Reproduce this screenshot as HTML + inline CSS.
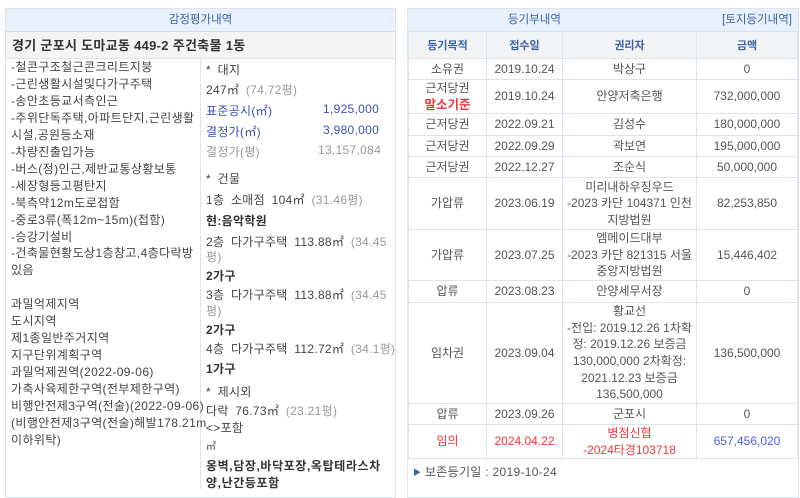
<!DOCTYPE html>
<html><head><meta charset="utf-8"><style>
*{margin:0;padding:0;box-sizing:border-box}
body{width:800px;height:488px;overflow:hidden;background:#fff;font-family:"Liberation Sans","Noto Sans CJK KR",sans-serif;font-size:12px;color:#444;position:relative}
.p{position:absolute;border:1px solid #dde3ea;}
.a{position:absolute;white-space:nowrap;letter-spacing:0.3px;word-spacing:3px}
.hd{position:absolute;background:#e8f1fb;border-bottom:1px solid #d3dde8;color:#3b63a6;text-align:center;font-size:11.5px;line-height:23px}
table{position:absolute;border-collapse:collapse;font-size:12px;color:#555}
td{border:1px solid #dde3ea;text-align:center;line-height:16.5px;padding:0 2px}
th{border:1px solid #dde3ea;background:#f2f3f5;color:#3b63a6;font-weight:bold;font-size:11px;height:27px}
.r{color:#f03838}
.b{font-weight:bold;color:#333}
.g{color:#999}
.bl{color:#3a4fb8}
</style></head><body>
<div class="p" style="left:5px;top:8px;width:391px;height:490px;"></div>
<div class="hd" style="left:6px;top:9px;width:389px;height:23px;">감정평가내역</div>
<div class="a" style="left:6px;top:32px;width:389px;height:27px;background:#f4f4f4;border-bottom:1px solid #dde3ea;font-size:13px;font-weight:bold;color:#333;line-height:27px;padding-left:6px;word-spacing:0">경기 군포시 도마교동 449-2 주건축물 1동</div>
<div class="a" style="left:200px;top:59px;width:1px;height:430px;background:#dde3ea"></div>
<div class="a" style="left:11px;top:59px;line-height:16.95px;font-size:12px;color:#444;letter-spacing:0.4px;word-spacing:0">-철콘구조철근콘크리트지붕<br>-근린생활시설및다가구주택<br>-송안초등교서측인근<br>-주위단독주택,아파트단지,근린생활<br>시설,공원등소재<br>-차량진출입가능<br>-버스(정)인근,제반교통상황보통<br>-세장형등고평탄지<br>-북측약12m도로접함<br>-중로3류(폭12m~15m)(접함)<br>-승강기설비<br>-건축물현황도상1층창고,4층다락방<br>있음<br><br>과밀억제지역<br>도시지역<br>제1종일반주거지역<br>지구단위계획구역<br>과밀억제권역(2022-09-06)<br>가축사육제한구역(전부제한구역)<br>비행안전제3구역(전술)(2022-09-06)<br>(비행안전제3구역(전술)해발178.21m<br>이하위탁)</div>
<div class="a" style="left:206px;top:61px">* 대지</div>
<div class="a" style="left:206px;top:81px">247㎡ <span class="g">(74.72평)</span></div>
<div class="a bl" style="left:206px;top:102px">표준공시(㎡)</div><div class="a bl" style="left:323px;top:102px">1,925,000</div>
<div class="a bl" style="left:206px;top:123px">결정가(㎡)</div><div class="a bl" style="left:323px;top:123px">3,980,000</div>
<div class="a g" style="left:206px;top:143px">결정가(평)</div><div class="a g" style="left:318px;top:143px">13,157,084</div>
<div class="a" style="left:206px;top:170px">* 건물</div>
<div class="a" style="left:206px;top:191px">1층 소매점 104㎡ <span class="g">(31.46평)</span></div>
<div class="a b" style="left:206px;top:212px">현:음악학원</div>
<div class="a" style="left:206px;top:233px">2층 다가구주택 113.88㎡ <span class="g">(34.45</span></div>
<div class="a g" style="left:206px;top:248px">평)</div>
<div class="a b" style="left:206px;top:267px">2가구</div>
<div class="a" style="left:206px;top:286px">3층 다가구주택 113.88㎡ <span class="g">(34.45</span></div>
<div class="a g" style="left:206px;top:302px">평)</div>
<div class="a b" style="left:206px;top:321px">2가구</div>
<div class="a" style="left:206px;top:340px">4층 다가구주택 112.72㎡ <span class="g">(34.1평)</span></div>
<div class="a b" style="left:206px;top:360px">1가구</div>
<div class="a" style="left:206px;top:383px">* 제시외</div>
<div class="a" style="left:206px;top:402px">다락 76.73㎡ <span class="g">(23.21평)</span></div>
<div class="a" style="left:206px;top:419px">&lt;&gt;포함</div>
<div class="a" style="left:206px;top:438px;font-size:10px">㎡</div>
<div class="a b" style="left:206px;top:457px;letter-spacing:0.6px;word-spacing:0">옹벽,담장,바닥포장,옥탑테라스차</div>
<div class="a b" style="left:206px;top:474px;letter-spacing:0.6px;word-spacing:0">양,난간등포함</div>

<div class="p" style="left:407px;top:8px;width:392px;height:490px;"></div>
<div class="hd" style="left:408px;top:9px;width:390px;height:23px;"><span style="position:absolute;left:100px">등기부내역</span><span style="position:absolute;right:6px">[토지등기내역]</span></div>
<table style="left:408px;top:31px;width:390px">
<tr><th style="width:78px">등기목적</th><th style="width:76px">접수일</th><th style="width:134px">권리자</th><th>금액</th></tr>
<tr style="height:21px"><td>소유권</td><td>2019.10.24</td><td>박상구</td><td>0</td></tr>
<tr style="height:34px"><td>근저당권<br><b class="r" style="font-size:12.5px">말소기준</b></td><td>2019.10.24</td><td>안양저축은행</td><td>732,000,000</td></tr>
<tr style="height:22px"><td>근저당권</td><td>2022.09.21</td><td>김성수</td><td>180,000,000</td></tr>
<tr style="height:21px"><td>근저당권</td><td>2022.09.29</td><td>곽보연</td><td>195,000,000</td></tr>
<tr style="height:21px"><td>근저당권</td><td>2022.12.27</td><td>조순식</td><td>50,000,000</td></tr>
<tr style="height:52px"><td>가압류</td><td>2023.06.19</td><td>미리내하우징우드<br>-2023 카단 104371 인천<br>지방법원</td><td>82,253,850</td></tr>
<tr style="height:51px"><td>가압류</td><td>2023.07.25</td><td>엠메이드대부<br>-2023 카단 821315 서울<br>중앙지방법원</td><td>15,446,402</td></tr>
<tr style="height:22px"><td>압류</td><td>2023.08.23</td><td>안양세무서장</td><td>0</td></tr>
<tr style="height:101px"><td>임차권</td><td>2023.09.04</td><td style="line-height:16.6px">황교선<br>-전입: 2019.12.26 1차확<br>정: 2019.12.26 보증금<br>130,000,000 2차확정:<br>2021.12.23 보증금<br>136,500,000</td><td>136,500,000</td></tr>
<tr style="height:21px"><td>압류</td><td>2023.09.26</td><td>군포시</td><td>0</td></tr>
<tr style="height:34px" class="r"><td>임의</td><td>2024.04.22</td><td>병점신협<br>-2024타경103718</td><td style="color:#4a5ef0">657,456,020</td></tr>
</table>
<div class="a" style="left:413px;top:463px;color:#555;word-spacing:0"><span style="color:#3b63a6;font-size:8px;vertical-align:1px">▶</span> 보존등기일 : 2019-10-24</div>
</body></html>
